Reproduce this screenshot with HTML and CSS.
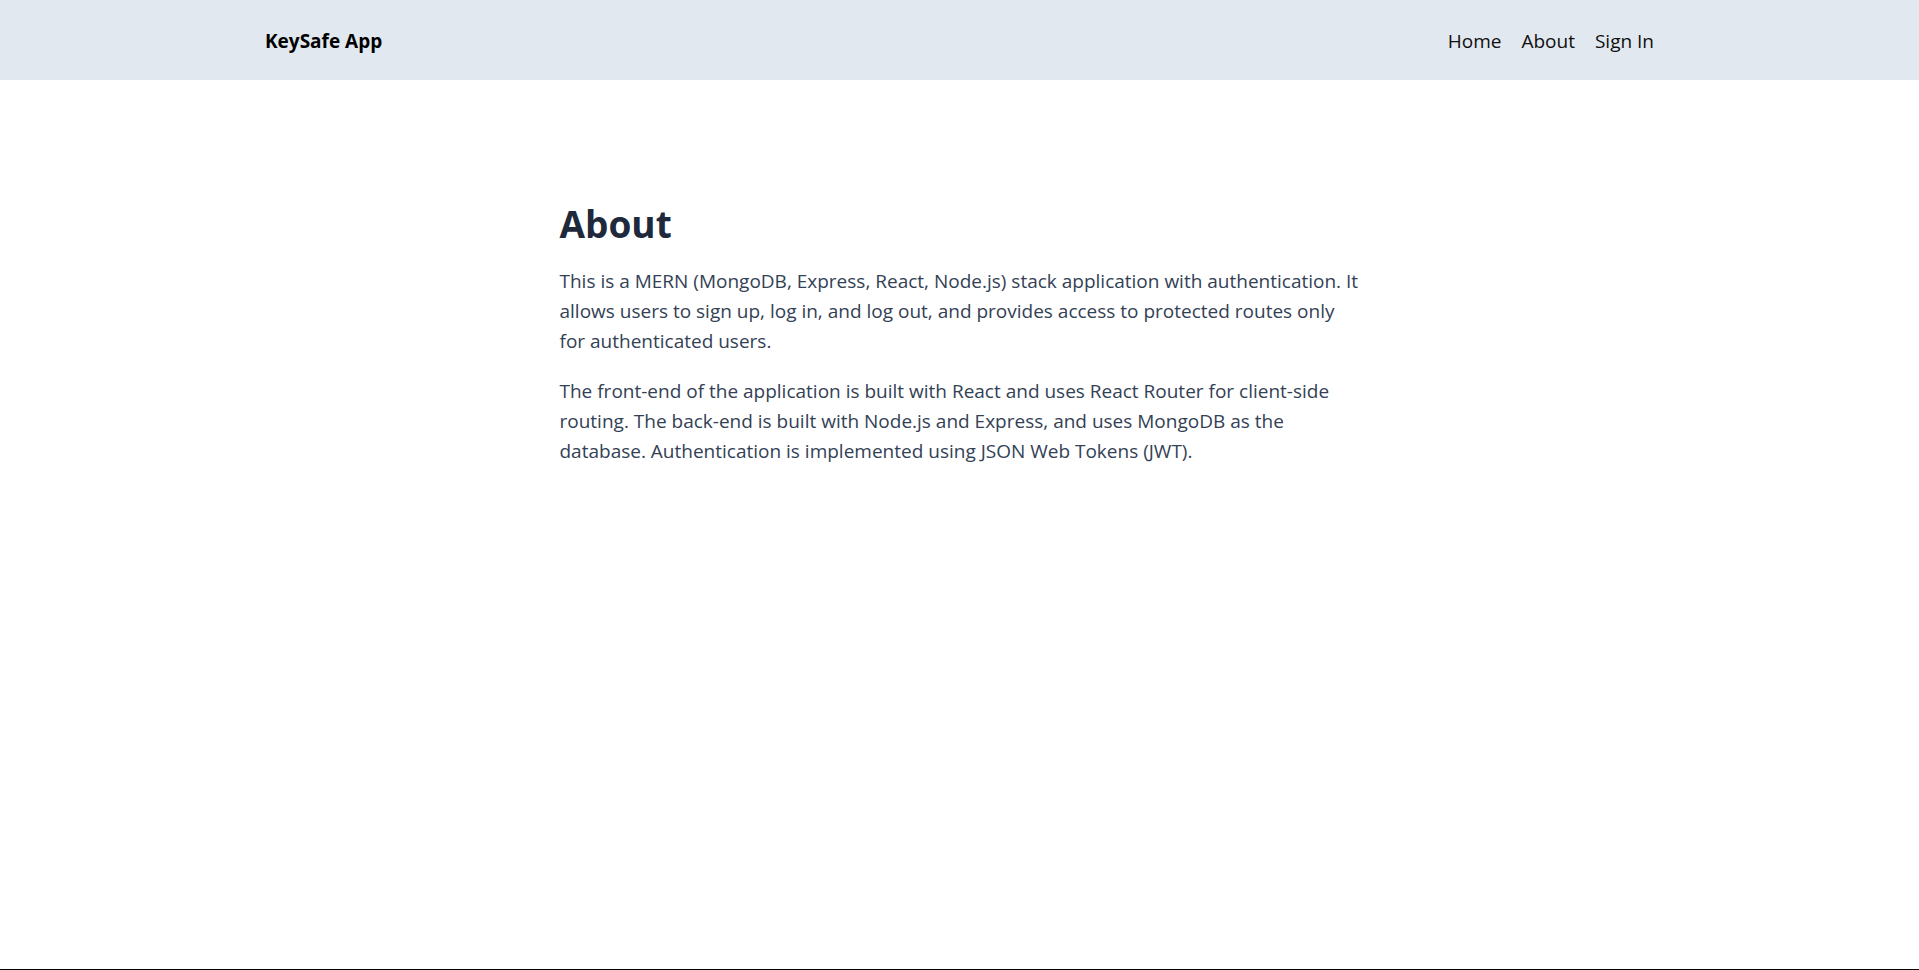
FILE: index.html
```html
<!DOCTYPE html>
<html lang="en">
<head>
<meta charset="utf-8">
<title>KeySafe App</title>
<link rel="stylesheet" href="styles.css">
</head>
<body>
<div class="page">
  <header class="header">
    <div class="header-inner">
      <a class="logo" href="#">KeySafe App</a>
      <nav class="nav">
        <a class="nav-link" href="#">Home</a>
        <a class="nav-link" href="#">About</a>
        <a class="nav-link" href="#">Sign In</a>
      </nav>
    </div>
  </header>
  <main class="main">
    <h1 class="title">About</h1>
    <p class="text">This is a MERN (MongoDB, Express, React, Node.js) stack application with authentication. It allows users to sign up, log in, and log out, and provides access to protected routes only for authenticated users.</p>
    <p class="text">The front-end of the application is built with React and uses React Router for client-side routing. The back-end is built with Node.js and Express, and uses MongoDB as the database. Authentication is implemented using JSON Web Tokens (JWT).</p>
  </main>
</div>
</body>
</html>
```
FILE: styles.css
```css
* { box-sizing: border-box; }
html, body { margin: 0; padding: 0; }
body {
  font-family: "Open Sans", "Noto Sans", sans-serif;
  background: #ffffff;
  color: #000;
}
.page {
  min-height: 100vh;
  border-bottom: 1px solid #000;
  display: flex;
  flex-direction: column;
}
.header {
  background: #e2e8f0;
  height: 80px;
}
.header-inner {
  max-width: 1389px;
  height: 100%;
  margin: 0 auto;
  padding-top: 2px;
  display: flex;
  align-items: center;
  justify-content: space-between;
}
.logo {
  font-size: 19px;
  font-weight: 700;
  color: #000;
  text-decoration: none;
  line-height: 28px;
}
.nav {
  display: flex;
  gap: 20px;
}
.nav-link {
  font-size: 19px;
  color: #0f0f0f;
  text-decoration: none;
  line-height: 28px;
}
.main {
  width: 100%;
  max-width: 896px;
  margin: 0 auto;
  padding: 122px 48px 0;
}
.title {
  margin: 0 0 20px;
  font-size: 37px;
  line-height: 44px;
  font-weight: 700;
  color: #1e293b;
}
.text {
  margin: 0 0 20px;
  font-size: 19px;
  line-height: 30px;
  color: #334155;
}
```
